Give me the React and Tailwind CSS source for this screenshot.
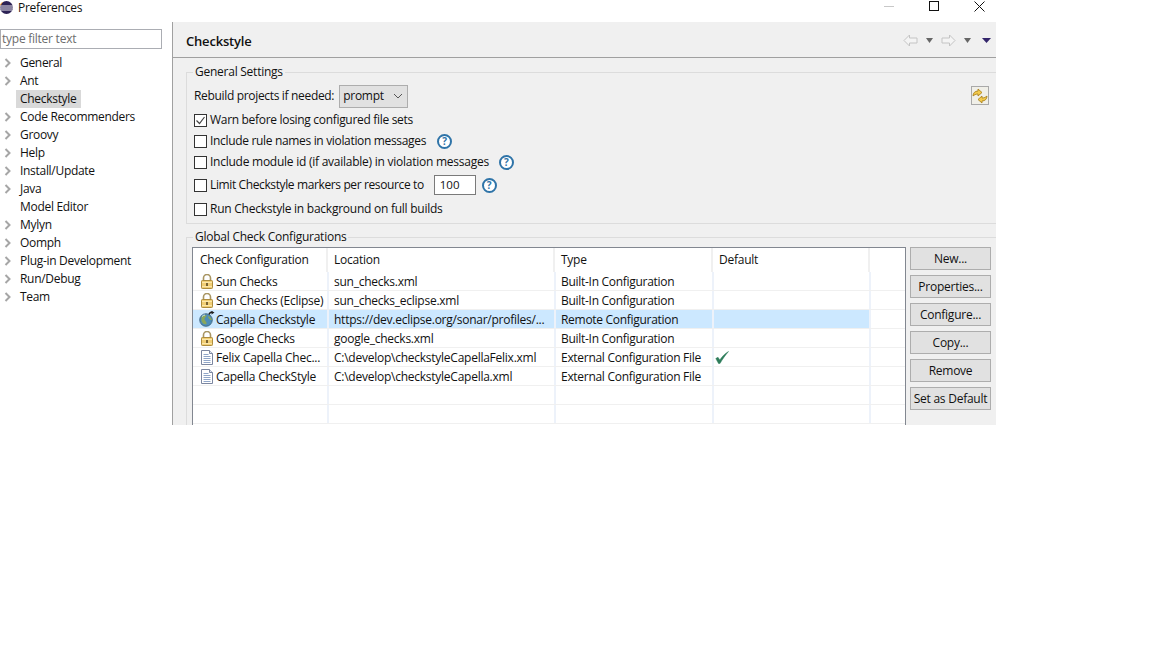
const font = { fontFamily: '"Open Sans","Noto Sans",sans-serif' };

const tree = [
  ["General", 1], ["Ant", 1], ["Checkstyle", 0, 1], ["Code Recommenders", 1], ["Groovy", 1], ["Help", 1],
  ["Install/Update", 1], ["Java", 1], ["Model Editor", 0], ["Mylyn", 1], ["Oomph", 1],
  ["Plug-in Development", 1], ["Run/Debug", 1], ["Team", 1],
];

const rows = [
  ["lock", "Sun Checks", "sun_checks.xml", "Built-In Configuration"],
  ["lock", "Sun Checks (Eclipse)", "sun_checks_eclipse.xml", "Built-In Configuration"],
  ["globe", "Capella Checkstyle", "https://dev.eclipse.org/sonar/profiles/...", "Remote Configuration", false, true],
  ["lock", "Google Checks", "google_checks.xml", "Built-In Configuration"],
  ["doc", "Felix Capella Chec...", "C:\\develop\\checkstyleCapellaFelix.xml", "External Configuration File", true],
  ["doc", "Capella CheckStyle", "C:\\develop\\checkstyleCapella.xml", "External Configuration File"],
  [null, "", "", ""],
  [null, "", "", ""],
];

function Chevron() {
  return (
    <svg width="8" height="10" viewBox="0 0 8 10" className="shrink-0">
      <path d="M1.500 1l4 4-4 4" fill="none" stroke="#a6a6a6" strokeWidth="2" />
    </svg>
  );
}

function Lock() {
  return (
    <svg width="12" height="15" viewBox="0 0 12 15">
      <path d="M2.500 6.500V4a3.500 3.500 0 0 1 7 0v2.500" fill="none" stroke="#a89562" strokeWidth="1.600" />
      <rect x="0.500" y="6.500" width="11" height="8" rx="0.800" fill="#f1ce74" stroke="#ad8c3e" />
      <path d="M1 8.500h10M1 12.500h10" stroke="#fbe7ab" />
      <rect x="5" y="9" width="2" height="3" fill="#7a6330" />
    </svg>
  );
}

function Globe() {
  return (
    <svg width="16" height="16" viewBox="0 0 16 16">
      <circle cx="7" cy="9" r="6.300" fill="#4d8db8" stroke="#3c5f78" strokeWidth="0.800" />
      <path d="M2.500 6c2-2.500 4-2 5-1.500s-2 1.500-2 3.500 2.500 2 2 5c-2 1-4-.5-5-3zM9 5c2 .5 3.500 2 4 4-2 .5-2.500-1-3.500-2z" fill="#8aa75a" />
      <path d="M3 5.500a5 5 0 0 1 3-1.500" fill="none" stroke="#c7e0ee" />
      <path d="M10 3.500c.5-1.500 1.700-2.500 3.500-2.500" fill="none" stroke="#1d1d1d" strokeWidth="1.400" />
      <path d="M12.500 0l3 1.500-3 2z" fill="#1d1d1d" />
    </svg>
  );
}

function Doc() {
  return (
    <svg width="12" height="15" viewBox="0 0 12 15">
      <path d="M.5.500h8l3 3v11H.500z" fill="#fff" stroke="#7b86a0" />
      <path d="M8.500.500v3h3" fill="#dfe5f1" stroke="#7b86a0" />
      <path d="M2.500 4.500h5M2.500 6.500h7M2.500 8.500h7M2.500 10.500h7M2.500 12.500h7" stroke="#8fa5c8" />
    </svg>
  );
}

function Help() {
  return (
    <span className="flex h-[15px] w-[15px] items-center justify-center rounded-full border-2 border-[#2f74a8] bg-white text-[10px] leading-none font-bold text-[#2f74a8]">
      ?
    </span>
  );
}

function Box({ checked }) {
  return (
    <span className="flex h-[13px] w-[13px] shrink-0 items-center justify-center border border-[#333] bg-white">
      {checked && (
        <svg width="11" height="11" viewBox="0 0 11 11">
          <path d="M1.500 5.500l3 3 5-6.500" fill="none" stroke="#444" strokeWidth="1.200" />
        </svg>
      )}
    </span>
  );
}

function Opt({ checked, label, children, cls = "", track }) {
  return (
    <div className={"flex items-center " + cls}>
      <Box checked={checked} />
      <span className={"ml-[3px] whitespace-nowrap " + track}>{label}</span>
      {children}
    </div>
  );
}

function Btn({ label }) {
  return (
    <button className="flex h-[23px] w-[81px] items-center justify-center border border-[#adadad] bg-[#e1e1e1] text-xs tracking-[-0.25px] text-[#111]">
      {label}
    </button>
  );
}

function Arrow({ flip }) {
  return (
    <svg width="15" height="13" viewBox="0 0 15 13" className={flip ? "-scale-x-100" : ""}>
      <path d="M1 6.500L6.500 1v3h7.500v5H6.500v3z" fill="#f4f4f4" stroke="#c4c4c4" />
    </svg>
  );
}

function Tri({ dark }) {
  return (
    <svg width={dark ? 9 : 7} height="5" viewBox="0 0 9 5" preserveAspectRatio="none">
      <path d="M0 0h9L4.500 5z" fill={dark ? "#33256b" : "#666"} />
    </svg>
  );
}

export default function App() {
  return (
    <div className="h-[648px] w-[1152px] overflow-hidden bg-white text-xs text-[#111]" style={font}>
      <div className="flex h-[425px] w-[996px] flex-col overflow-hidden">
        <div className="flex h-[22px] shrink-0 items-start">
          <svg width="13" height="13" viewBox="0 0 13 13" className="mt-[1px] shrink-0">
            <circle cx="6.500" cy="6.500" r="6.500" fill="#2c2255" />
            <path d="M0 5h13M0 7h13M.5 9h12" stroke="#fff" strokeWidth="0.9" />
            <path d="M2.300 1.300a6.500 6.500 0 0 0-1.800 3" fill="none" stroke="#f7941e" strokeWidth="1" />
          </svg>
          <span className="ml-[5px] leading-[15px] tracking-[-0.25px]">Preferences</span>
          <div className="ml-auto flex items-start">
            <div className="mt-[6px] h-px w-[10px] bg-[#c8c8c8]" />
            <div className="mt-[1px] ml-[35px] h-[10px] w-[10px] border border-[#111]" />
            <svg width="11" height="11" viewBox="0 0 11 11" className="mt-[1px] ml-[35px] mr-[11px]">
              <path d="M.5.500l10 10M10.500.500l-10 10" stroke="#111" strokeWidth="1" />
            </svg>
          </div>
        </div>

        <div className="flex min-h-0 flex-1">
          <div className="w-[172px] shrink-0">
            <div className="mt-[7px] flex h-[20px] w-[162px] items-center border border-[#abadb3] pl-[1px] text-[#6d6d6d]">
              <span className="tracking-[-0.25px]">type filter text</span>
            </div>
            <div className="mt-[5px] flex flex-col">
              {tree.map(([n, c, sel]) => (
                <div key={n} className="flex h-[18px] items-center pl-[4px]">
                  <span className="w-[12px] shrink-0">{c ? <Chevron /> : null}</span>
                  <span className={"px-[4px] leading-[18px] tracking-[-0.3px] " + (sel ? "bg-[#d9d9d9]" : "")}>{n}</span>
                </div>
              ))}
            </div>
          </div>

          <div className="flex min-w-0 flex-1 flex-col border-l border-l-[#a0a0a0] bg-[#f0f0f0]">
            <div className="flex h-[36px] shrink-0 items-center border-b border-b-[#a0a0a0] pt-[4px] pr-[5px] pl-[13px]">
              <span className="text-[13px] font-semibold tracking-[-0.2px]">Checkstyle</span>
              <div className="mb-[3px] ml-auto flex items-center">
                <Arrow />
                <span className="ml-[8px] flex"><Tri /></span>
                <span className="ml-[8px] flex"><Arrow flip /></span>
                <span className="ml-[8px] flex"><Tri /></span>
                <span className="ml-[11px] flex"><Tri dark /></span>
              </div>
            </div>

            <div className="ml-[13px] flex min-h-0 flex-1 flex-col">
              <fieldset className="mt-[7px] h-[159px] shrink-0 border border-r-0 border-[#dcdcdc] pl-[7px]">
                <legend className="ml-[-1px] px-[2px] leading-[14px] tracking-[-0.25px]">General Settings</legend>
                <div className="flex items-start pr-[7px]">
                  <div className="min-w-0 flex-1">
                    <div className="mt-[5px] flex h-[24px] items-center">
                      <span className="tracking-[-0.33px]">Rebuild projects if needed:</span>
                      <div className="ml-[5px] flex h-[23px] w-[69px] items-center justify-between border border-[#adadad] bg-[#e1e1e1] pr-[3px] pl-[3px]">
                        <span className="tracking-[-0.25px]">prompt</span>
                        <svg width="10" height="6" viewBox="0 0 10 6" className="mr-[1px]">
                          <path d="M1 1l4 4 4-4" fill="none" stroke="#555" strokeWidth="1" />
                        </svg>
                      </div>
                    </div>
                    <Opt checked label="Warn before losing configured file sets" cls="mt-[4px] h-[16px]" track="tracking-[-0.31px]" />
                    <Opt label="Include rule names in violation messages" cls="mt-[5px] h-[16px]" track="tracking-[-0.33px]">
                      <span className="ml-[11px]"><Help /></span>
                    </Opt>
                    <Opt label="Include module id (if available) in violation messages" cls="mt-[5px] h-[16px]" track="tracking-[-0.25px]">
                      <span className="ml-[10px]"><Help /></span>
                    </Opt>
                    <div className="mt-[5px] flex h-[20px] items-center">
                      <Box />
                      <span className="ml-[3px] whitespace-nowrap tracking-[-0.38px]">Limit Checkstyle markers per resource to</span>
                      <div className="ml-[10px] flex h-[20px] w-[42px] items-center border border-[#7a7a7a] bg-white pl-[5px] text-[11.500px]">100</div>
                      <span className="ml-[6px]"><Help /></span>
                    </div>
                    <Opt label="Run Checkstyle in background on full builds" cls="mt-[6px] h-[16px]" track="tracking-[-0.25px]" />
                  </div>
                  <div className="mt-[7px] flex h-[19px] w-[18px] items-center justify-center border border-[#a9a9a9] bg-[#f0efe8]">
                    <svg width="16" height="16" viewBox="0 0 16 16">
                      <path d="M1 8c0-3 2-5 5-5V1l4 3.500L6 8V6C4 6 2 7 1 8z" fill="#f2c94c" stroke="#a67c14" strokeWidth="0.800" />
                      <path d="M15 8c0 3-2 5-5 5v2l-4-3.500L10 8v2c2 0 4-1 5-2z" fill="#f2c94c" stroke="#a67c14" strokeWidth="0.800" />
                    </svg>
                  </div>
                </div>
              </fieldset>

              <fieldset className="mt-[6px] min-h-[300px] shrink-0 border border-r-0 border-b-0 border-[#dcdcdc] pl-[5px]">
                <legend className="ml-[1px] px-[2px] leading-[14px] tracking-[-0.25px]">Global Check Configurations</legend>
                <div className="mt-[3px] flex items-start">
                  <div className="h-[200px] w-[714px] shrink-0 border border-[#828790] bg-white">
                    <div className="flex h-[24px]">
                      {[["Check Configuration", 135, "pl-[7px]"], ["Location", 227, "pl-[6px]"], ["Type", 158, "pl-[6px]"], ["Default", 157, "pl-[6px]"], ["", 35, ""]].map(([h, w, p], i) => (
                        <div
                          key={i}
                          style={{ width: w }}
                          className={"flex shrink-0 items-center tracking-[-0.25px] " + p + " " + (i < 4 ? "border-r-2 border-r-[#f0f0f0]" : "")}
                        >
                          {h}
                        </div>
                      ))}
                    </div>
                    {rows.map(([ic, a, b, c, def, sel], i) => (
                      <div key={i} className="flex h-[19px] border-b border-b-[#f0f0f0]">
                        <div className={"flex w-[136px] shrink-0 items-center border-r-2 border-r-[#edf2fa] pl-[7px] " + (sel ? "bg-[#cce8ff]" : "")}>
                          <span className="flex w-[16px] shrink-0 justify-start">
                            {ic === "lock" && <span className="ml-[1px] flex"><Lock /></span>}
                            {ic === "globe" && <span className="-ml-[1px] flex"><Globe /></span>}
                            {ic === "doc" && <span className="ml-[1px] flex"><Doc /></span>}
                          </span>
                          <span className="mt-[2px] whitespace-nowrap tracking-[-0.25px]">{a}</span>
                        </div>
                        <div className={"flex w-[227px] shrink-0 items-center border-r-2 border-r-[#edf2fa] pl-[5px] " + (sel ? "bg-[#cce8ff]" : "")}>
                          <span className="mt-[2px] whitespace-nowrap tracking-[-0.25px]">{b}</span>
                        </div>
                        <div className={"flex w-[158px] shrink-0 items-center border-r-2 border-r-[#edf2fa] pl-[5px] " + (sel ? "bg-[#cce8ff]" : "")}>
                          <span className="mt-[2px] whitespace-nowrap tracking-[-0.29px]">{c}</span>
                        </div>
                        <div className={"flex w-[157px] shrink-0 items-center border-r-2 border-r-[#edf2fa] pl-[1px] " + (sel ? "bg-[#cce8ff]" : "")}>
                          {def && (
                            <svg width="14" height="13" viewBox="0 0 14 13">
                              <path d="M.8 7.500L3 6.300l1.800 2.800C7 5.500 10 2.500 13.500.500 10.500 4 7.500 8 5 12.500H3.500z" fill="#2e7d5b" stroke="#2e7d5b" strokeWidth="0.500" />
                            </svg>
                          )}
                        </div>
                      </div>
                    ))}
                  </div>
                  <div className="ml-[4px] flex flex-col gap-[5px]">
                    {["New...", "Properties...", "Configure...", "Copy...", "Remove", "Set as Default"].map((b) => (
                      <Btn key={b} label={b} />
                    ))}
                  </div>
                </div>
              </fieldset>
            </div>
          </div>
        </div>
      </div>
    </div>
  );
}
